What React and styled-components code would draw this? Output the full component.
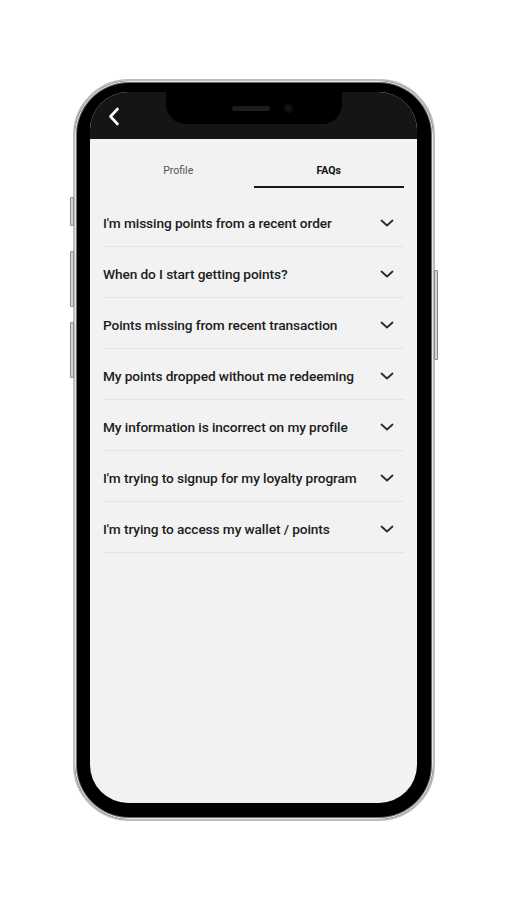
import React from "react";
import styled, { createGlobalStyle } from "styled-components";

const faqs = [
  "I'm missing points from a recent order",
  "When do I start getting points?",
  "Points missing from recent transaction",
  "My points dropped without me redeeming",
  "My information is incorrect on my profile",
  "I'm trying to signup for my loyalty program",
  "I'm trying to access my wallet / points",
];

const GlobalStyle = createGlobalStyle`
  html, body { margin: 0; padding: 0; background: #ffffff; }
  body { font-family: Roboto, "Liberation Sans", Arial, sans-serif; }
`;

const Page = styled.div`
  width: 507px;
  height: 900px;
  padding-top: 79px;
  box-sizing: border-box;
  display: flex;
  justify-content: center;
`;

const Phone = styled.div`
  position: relative;
  width: 362px;
  height: 742px;
  box-sizing: border-box;
  border-radius: 56px;
  background: #000;
  border: 2px solid #bdbdbd;
  box-shadow: inset 0 0 0 1px #e8e8e8, inset 0 0 0 2px #6a6a6a;
  padding: 11px 16px 16px 15px;
  margin-left: 1px;
`;

const SideButton = styled.div`
  position: absolute;
  width: 2px;
  background: #d4d4d4;
  border: 1px solid #8a8a8a;
  border-radius: 1px;
  ${(p) => (p.$right ? "right: -5px;" : "left: -5px;")}
  top: ${(p) => p.$top}px;
  height: ${(p) => p.$height}px;
`;

const Screen = styled.div`
  width: 100%;
  height: 100%;
  border-radius: 38px;
  overflow: hidden;
  background: #f2f2f2;
  display: flex;
  flex-direction: column;
`;

const Header = styled.div`
  position: relative;
  height: 47px;
  flex-shrink: 0;
  background: #151515;
  display: flex;
  align-items: center;
  padding-left: 18px;
  padding-top: 2px;
  box-sizing: border-box;
`;

const Notch = styled.div`
  position: absolute;
  top: 0;
  left: 50%;
  transform: translateX(-50%);
  width: 176px;
  height: 32px;
  background: #000;
  border-radius: 0 0 20px 20px;
  display: flex;
  align-items: center;
  justify-content: center;
  gap: 14px;
  padding-left: 18px;
  box-sizing: border-box;
`;

const Speaker = styled.div`
  width: 38px;
  height: 5px;
  border-radius: 3px;
  background: #1c1c1c;
`;

const Camera = styled.div`
  width: 9px;
  height: 9px;
  border-radius: 50%;
  background: #101522;
  box-shadow: inset 0 0 0 2px #0b0d14;
`;

const Content = styled.div`
  padding: 0 13px;
  display: flex;
  flex-direction: column;
`;

const Tabs = styled.div`
  display: grid;
  grid-template-columns: 1fr 1fr;
`;

const Tab = styled.div`
  text-align: center;
  font-size: 10.5px;
  line-height: 14px;
  padding: 25px 0 8px;
  color: ${(p) => (p.$active ? "#111" : "#555")};
  font-weight: ${(p) => (p.$active ? 700 : 400)};
  border-bottom: 2px solid ${(p) => (p.$active ? "#1a1a1a" : "transparent")};
`;

const List = styled.div`
  margin-top: 8px;
  display: flex;
  flex-direction: column;
`;

const Row = styled.div`
  height: 46px;
  padding-top: 4px;
  display: flex;
  align-items: center;
  justify-content: space-between;
  border-bottom: 1px solid #e3e3e6;
  box-sizing: content-box;
`;

const Question = styled.span`
  font-size: 13.7px;
  font-weight: 500;
  color: #1c1c1c;
  letter-spacing: -0.1px;
`;

const Chevron = styled.svg`
  width: 14px;
  height: 8px;
  margin-right: 10px;
  flex-shrink: 0;
`;

const BackIcon = () => (
  <svg width="12" height="19" viewBox="0 0 12 19">
    <path d="M9.5 2 L2.5 9.5 L9.5 17" fill="none" stroke="#fff" strokeWidth="2.6" strokeLinecap="round" strokeLinejoin="round" />
  </svg>
);

export default function App() {
  return (
    <>
      <GlobalStyle />
      <Page>
        <Phone>
          <SideButton $top={116} $height={27} />
          <SideButton $top={170} $height={54} />
          <SideButton $top={241} $height={54} />
          <SideButton $right $top={189} $height={88} />
          <Screen>
            <Header>
              <Notch>
                <Speaker />
                <Camera />
              </Notch>
              <BackIcon />
            </Header>
            <Content>
              <Tabs>
                <Tab>Profile</Tab>
                <Tab $active>FAQs</Tab>
              </Tabs>
              <List>
                {faqs.map((q) => (
                  <Row key={q}>
                    <Question>{q}</Question>
                    <Chevron viewBox="0 0 14 8">
                      <path d="M1.5 1.5 L7 6.5 L12.5 1.5" fill="none" stroke="#2a2a2a" strokeWidth="1.8" strokeLinecap="round" strokeLinejoin="round" />
                    </Chevron>
                  </Row>
                ))}
              </List>
            </Content>
          </Screen>
        </Phone>
      </Page>
    </>
  );
}
